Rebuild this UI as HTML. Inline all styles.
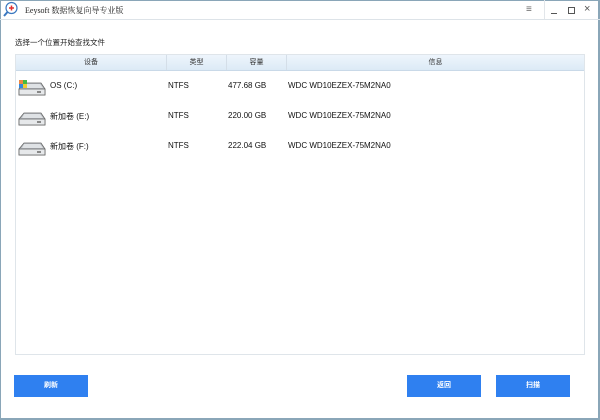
<!DOCTYPE html>
<html><head><meta charset="utf-8"><style>
*{margin:0;padding:0;box-sizing:border-box}
body{width:600px;height:420px;overflow:hidden;background:#fff;font-family:"Liberation Sans","Noto Sans CJK SC",sans-serif;font-size:8px;color:#222;position:relative}
.win{position:absolute;left:0;top:0;width:600px;height:420px;border:1px solid #8aa6b8;border-right:2px solid #8aa6b8;border-bottom:2px solid #8aa6b8}
.tb{position:absolute;left:0;top:0;width:600px;height:20px;border-bottom:1px solid #dde3e8}
.t{position:absolute;top:5px;left:25px;font-size:8px;font-family:"Liberation Serif","Noto Serif CJK SC",serif}
.ab{position:absolute}
.box{position:absolute;left:15px;top:54px;width:570px;height:301px;border:1px solid #dfe5ea}
.hd{position:absolute;left:0;top:0;width:568px;height:16px;background:linear-gradient(#eef5fc,#dceaf6);border-bottom:1px solid #c9d9e8}
.hd div{position:absolute;top:0;height:15px;line-height:15px;text-align:center;border-right:1px solid #d4dee8;font-size:7px;color:#333}
.r{position:absolute;font-size:8px;color:#111}
.btn{position:absolute;top:375px;width:74px;height:22px;background:#2f80f0;color:#fff;font-size:7px;text-align:center;line-height:22px;font-weight:bold}
</style></head><body>
<div class="win"></div>
<div class="tb"></div>
<svg class="ab" style="left:2px;top:1px" width="16" height="17" viewBox="0 0 16 17"><circle cx="9.5" cy="7" r="5.5" fill="#fff" stroke="#3a78c0" stroke-width="1.2"/><path d="M7 7h5M9.5 4.5v5" stroke="#e03030" stroke-width="1.5"/><path d="M5.5 11l-3.5 4" stroke="#3a78c0" stroke-width="2"/></svg>
<div class="t">Eeysoft 数据恢复向导专业版</div>
<div class="ab" style="left:526px;top:4px;font-size:10px;color:#666">≡</div>
<div class="ab" style="left:544px;top:0;width:1px;height:19px;background:#e2e6ea"></div>
<div class="ab" style="left:551px;top:13px;width:6px;height:1px;background:#555"></div>
<div class="ab" style="left:568px;top:7px;width:7px;height:7px;border:1px solid #555"></div>
<div class="ab" style="left:584px;top:3px;font-size:11px;color:#555">×</div>
<div class="ab" style="left:15px;top:37px;font-size:7.5px">选择一个位置开始查找文件</div>
<div class="box"><div class="hd">
<div style="left:0;width:151px">设备</div><div style="left:151px;width:60px">类型</div><div style="left:211px;width:60px">容量</div><div style="left:271px;width:297px;border:none">信息</div></div></div>
<svg class="ab" style="left:17px;top:79px" width="30" height="20"><path d="M2 10l5-6h17l4 6v6H2z" fill="#b9bec3" stroke="#666" stroke-width=".8"/><path d="M7 5h16l3 4H5z" fill="#dfe2e5"/><rect x="2" y="10" width="26" height="6" fill="#e6e8ea" stroke="#666" stroke-width=".8"/><rect x="20" y="12" width="4" height="2" fill="#888"/><rect x="2" y="1" width="4" height="4" fill="#e84"/><rect x="6" y="1" width="4" height="4" fill="#4b4"/><rect x="2" y="5" width="4" height="4" fill="#38d"/><rect x="6" y="5" width="4" height="4" fill="#ec3"/></svg>
<svg class="ab" style="left:17px;top:109px" width="30" height="20"><path d="M2 10l5-6h17l4 6v6H2z" fill="#b9bec3" stroke="#666" stroke-width=".8"/><path d="M7 5h16l3 4H5z" fill="#dfe2e5"/><rect x="2" y="10" width="26" height="6" fill="#e6e8ea" stroke="#666" stroke-width=".8"/><rect x="20" y="12" width="4" height="2" fill="#888"/></svg>
<svg class="ab" style="left:17px;top:139px" width="30" height="20"><path d="M2 10l5-6h17l4 6v6H2z" fill="#b9bec3" stroke="#666" stroke-width=".8"/><path d="M7 5h16l3 4H5z" fill="#dfe2e5"/><rect x="2" y="10" width="26" height="6" fill="#e6e8ea" stroke="#666" stroke-width=".8"/><rect x="20" y="12" width="4" height="2" fill="#888"/></svg>
<div class="r" style="left:50px;top:81px">OS (C:)</div><div class="r" style="left:168px;top:81px">NTFS</div><div class="r" style="left:228px;top:81px">477.68 GB</div><div class="r" style="left:288px;top:81px">WDC WD10EZEX-75M2NA0</div>
<div class="r" style="left:50px;top:111px">新加卷 (E:)</div><div class="r" style="left:168px;top:111px">NTFS</div><div class="r" style="left:228px;top:111px">220.00 GB</div><div class="r" style="left:288px;top:111px">WDC WD10EZEX-75M2NA0</div>
<div class="r" style="left:50px;top:141px">新加卷 (F:)</div><div class="r" style="left:168px;top:141px">NTFS</div><div class="r" style="left:228px;top:141px">222.04 GB</div><div class="r" style="left:288px;top:141px">WDC WD10EZEX-75M2NA0</div>
<div class="btn" style="left:14px">刷新</div>
<div class="btn" style="left:407px">返回</div>
<div class="btn" style="left:496px">扫描</div>
</body></html>
